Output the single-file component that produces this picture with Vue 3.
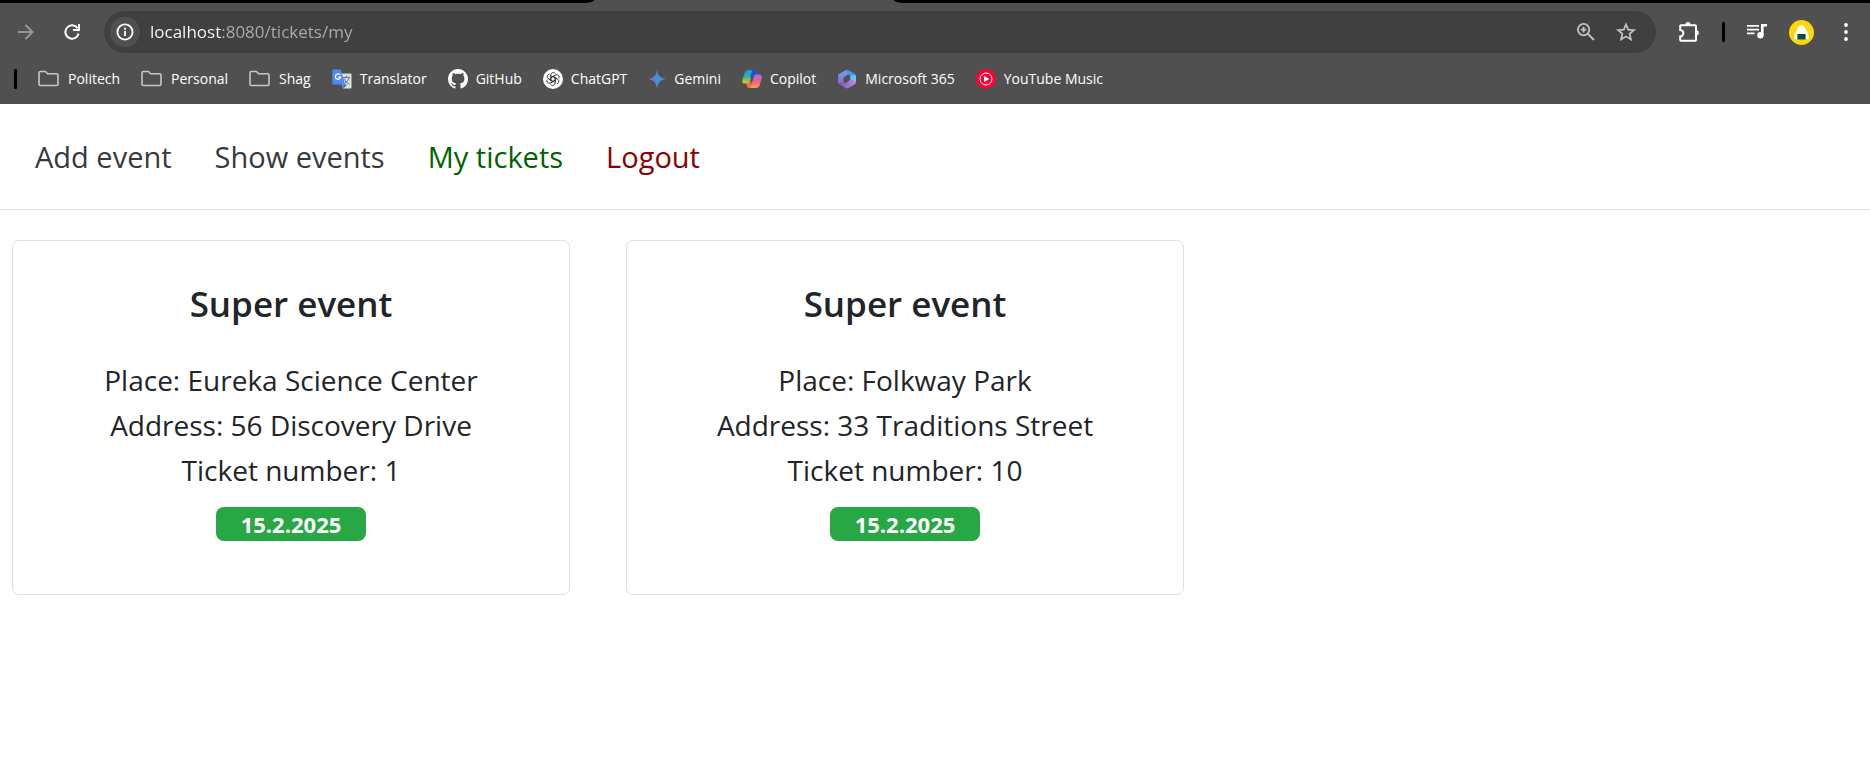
<script setup>
import { ref } from 'vue'

const address = ref('localhost:8080/tickets/my')

const bookmarks = [
  { icon: 'folder', label: 'Politech' },
  { icon: 'folder', label: 'Personal' },
  { icon: 'folder', label: 'Shag' },
  { icon: 'translate', label: 'Translator' },
  { icon: 'github', label: 'GitHub' },
  { icon: 'chatgpt', label: 'ChatGPT' },
  { icon: 'gemini', label: 'Gemini' },
  { icon: 'copilot', label: 'Copilot' },
  { icon: 'm365', label: 'Microsoft 365' },
  { icon: 'ytmusic', label: 'YouTube Music' },
]

const links = [
  { label: 'Add event', tone: '' },
  { label: 'Show events', tone: '' },
  { label: 'My tickets', tone: 'active' },
  { label: 'Logout', tone: 'danger' },
]

const tickets = [
  { id: 1, title: 'Super event', place: 'Eureka Science Center', address: '56 Discovery Drive', number: 1, date: '15.2.2025' },
  { id: 2, title: 'Super event', place: 'Folkway Park', address: '33 Traditions Street', number: 10, date: '15.2.2025' },
]
</script>

<template>
  <div class="window">
    <header class="browser">
      <div class="tabstrip"><span class="strip left"></span><span class="tab"></span><span class="strip right"></span></div>

      <div class="toolbar">
        <button class="tool dim" type="button" aria-label="Forward">
          <svg width="16" height="16" viewBox="0 0 16 16" fill="none" stroke="#969696" stroke-width="2"><path d="M0 8h14M7.5 1l7 7-7 7" /></svg>
        </button>
        <button class="tool reload" type="button" aria-label="Reload">
          <svg width="16" height="16" viewBox="0 0 16 16" fill="none" stroke="#fff" stroke-width="2"><path d="M13.6 4.2A6.7 6.7 0 1 0 14.6 9.6" /><path d="M15 0v6H9" /></svg>
        </button>
        <div class="omnibox">
          <button class="tool info" type="button" aria-label="Site information">
            <svg width="18" height="18" viewBox="0 0 18 18"><circle cx="9" cy="9" r="7.6" fill="none" stroke="#fff" stroke-width="1.8" /><path d="M9 8v5M9 4.8v2" stroke="#fff" stroke-width="1.8" /></svg>
          </button>
          <input v-model="address" class="url" type="text" aria-label="Address" spellcheck="false" />
          <button class="tool" type="button" aria-label="Zoom">
            <svg width="18" height="18" viewBox="0 0 18 18" fill="none" stroke="#c4c4c4" stroke-width="1.8"><circle cx="6.6" cy="6.6" r="5.7" /><path d="M11 11l6 6M3.8 6.6h5.6M6.6 3.8v5.6" /></svg>
          </button>
          <button class="tool star" type="button" aria-label="Bookmark this page">
            <svg width="20" height="20" viewBox="0 0 20 20" fill="none" stroke="#c4c4c4" stroke-width="1.7"><path d="M10 2.4l2.2 5.2 5.7.5-4.3 3.7 1.3 5.6-4.9-3-4.9 3 1.3-5.6L2.1 8.1l5.7-.5z" /></svg>
          </button>
        </div>
        <div class="actions">
          <button class="tool" type="button" aria-label="Extensions">
            <svg width="22" height="22" viewBox="0 0 22 22"><path d="M3 4.2h14.2q.8 0 .8.8v14q0 .8-.8.8H3q-.8 0-.8-.8v-3.6a3.2 3.2 0 0 0 0-6.4V5q0-.8.8-.8z" fill="none" stroke="#fff" stroke-width="2" /><path d="M7.4 4a2.6 2.9 0 0 1 5.2 0zM18 9.2a2.9 2.6 0 0 1 0 5.2z" fill="#fff" /></svg>
          </button>
          <span class="divider"></span>
          <button class="tool" type="button" aria-label="Media controls">
            <svg width="20" height="16" viewBox="0 0 20 16"><path d="M0 1.8h12M0 5.6h12M0 9.4h7.5" stroke="#fff" stroke-width="1.7" /><path d="M14 0h6v2.6h-3.4v8.6H14z" fill="#fff" /><circle cx="13.4" cy="11.3" r="3.2" fill="#fff" /></svg>
          </button>
          <button class="tool avatar" type="button" aria-label="Profile">
            <svg width="25" height="25" viewBox="0 0 25 25"><circle cx="12.5" cy="12.5" r="12.5" fill="#ffd60a" /><path d="M12.5 5c1.8 0 2.8 1.5 4.2 4l2.6 5.4c1.5 3.2.5 4.9-2 4.9H7.7c-2.5 0-3.5-1.7-2-4.9L8.3 9c1.4-2.5 2.4-4 4.2-4z" fill="#fff" /><path d="M8.4 14h8.2v5.5H8.4z" fill="#004d40" /></svg>
          </button>
          <button class="tool" type="button" aria-label="Menu">
            <svg width="4" height="18" viewBox="0 0 4 18" fill="#fff"><circle cx="2" cy="2" r="1.9" /><circle cx="2" cy="9" r="1.9" /><circle cx="2" cy="16" r="1.9" /></svg>
          </button>
        </div>
      </div>

      <nav class="bookmarks" aria-label="Bookmarks">
        <span class="divider"></span>
        <a v-for="item in bookmarks" :key="item.label" href="#" class="bookmark">
          <svg v-if="item.icon === 'folder'" width="22" height="20" viewBox="0 0 22 20" fill="none" stroke="#c7c7c7" stroke-width="1.6"><path d="M1 4q0-1.5 1.5-1.5h5l2 2.3h9q1.5 0 1.5 1.5V15q0 1.5-1.5 1.5h-16Q1 16.500 1 15z" /></svg>
          <svg v-else-if="item.icon === 'translate'" width="20" height="20" viewBox="0 0 20 20"><path d="M8 4.5h10.5q1 0 1 1v13q0 1-1 1H11z" fill="#dedede" /><path d="M10 8.500h8M14.500 6.500v2M12 9.500q1.500 4 5.500 6M17 9q-1 4-5.500 6.500" fill="none" stroke="#607988" stroke-width="1" /><path d="M11 15.500h4L11.500 19.500z" fill="#3059c8" /><path d="M1.500.5h7.200l4.500 15H1.500q-1.200 0-1.200-1.200V1.700Q.3.500 1.500.5z" fill="#4c8bf5" /><path d="M8.300 6A2.700 2.700 0 1 0 8.700 8.200H6.200" fill="none" stroke="#fff" stroke-width="1.300" /></svg>
          <svg v-else-if="item.icon === 'github'" width="20" height="20" viewBox="0 0 16 16" fill="#fff"><path d="M8 0C3.580 0 0 3.580 0 8c0 3.540 2.290 6.530 5.470 7.590.4.070.55-.17.55-.38 0-.19-.01-.82-.01-1.490-2.010.37-2.530-.49-2.690-.94-.09-.23-.48-.94-.82-1.130-.28-.15-.68-.52-.01-.53.63-.01 1.080.58 1.230.82.72 1.210 1.870.87 2.330.66.07-.52.28-.87.51-1.070-1.780-.2-3.640-.89-3.640-3.950 0-.87.31-1.590.82-2.150-.08-.2-.36-1.020.08-2.120 0 0 .67-.21 2.200.82.64-.18 1.320-.27 2-.27s1.360.09 2 .27c1.530-1.040 2.200-.82 2.200-.82.44 1.100.16 1.920.08 2.120.51.56.82 1.270.82 2.150 0 3.070-1.870 3.750-3.650 3.950.29.25.54.73.54 1.480 0 1.070-.01 1.930-.01 2.200 0 .21.15.46.55.38A8.010 8.010 0 0 0 16 8c0-4.420-3.580-8-8-8z" /></svg>
          <svg v-else-if="item.icon === 'chatgpt'" width="20" height="20" viewBox="0 0 20 20"><circle cx="10" cy="10" r="10" fill="#fff" /><g fill="none" stroke="#222" stroke-width=".8"><path v-for="n in 6" :key="n" :transform="`rotate(${n * 60} 10 10)`" d="M7.800 11.300V6.200q0-2.600 2.400-2.700 1.400 0 2.300 1M7.800 8.800L12.200 6.300" /></g></svg>
          <svg v-else-if="item.icon === 'gemini'" width="18" height="20" viewBox="0 0 18 20"><defs><linearGradient id="gemini-fill" x1="0" x2="1"><stop offset="0" stop-color="#8a6cc0" /><stop offset=".5" stop-color="#4a8bdc" /><stop offset="1" stop-color="#35a2cf" /></linearGradient></defs><path d="M9 1q1 8 8.500 9Q10 11 9 19 8 11 .5 10 8 9 9 1z" fill="url(#gemini-fill)" /></svg>
          <svg v-else-if="item.icon === 'copilot'" width="20" height="20" viewBox="0 0 20 20"><defs><linearGradient id="cop-a" x1="0" y1="0" x2="0" y2="1"><stop offset="0" stop-color="#159bed" /><stop offset=".5" stop-color="#36b98c" /><stop offset="1" stop-color="#f3c31e" /></linearGradient><linearGradient id="cop-b" x1="0" y1="0" x2="0" y2="1"><stop offset="0" stop-color="#ac68ee" /><stop offset=".5" stop-color="#f0608d" /><stop offset="1" stop-color="#ff9c50" /></linearGradient></defs><path d="M6.500 1h6.500L9 9q-1.500 5.500-3.500 5.500h-3q-3 0-2.200-3.500L2.800 4Q3.800 1 6.500 1z" fill="url(#cop-a)" /><path d="M10.500 1h2q1.700 0 2.200 2l.5 2.500H12.500q-1.500 0-2 2L9.500 10 8 8z" fill="#1a55d8" /><path d="M14 5.500h3.300q3.200 0 2.400 3.500l-2 7q-.8 3-3.500 3H6.500q2-.5 2.800-3L12 7.500q.5-2 2-2z" fill="url(#cop-b)" /><path d="M4.300 14.500h1.200q1.500 0 2.500-3L9.500 14 9 16.500Q8.500 19 6.800 19q-1.500 0-2-2z" fill="#f67138" /></svg>
          <svg v-else-if="item.icon === 'm365'" width="20" height="20" viewBox="0 0 20 20"><defs><linearGradient id="ms-a" x1="0" y1="0" x2="0" y2="1"><stop offset="0" stop-color="#6da5e8" /><stop offset="1" stop-color="#8d66d0" /></linearGradient><linearGradient id="ms-b" x1="0" x2="1"><stop offset="0" stop-color="#6b58b5" /><stop offset="1" stop-color="#ca8ce0" /></linearGradient></defs><path d="M9 1L2 5Q1 5.600 1 6.800V13.300q0 1 1 1.600l4.500-1.400V8.500L12 5z" fill="url(#ms-a)" /><path d="M8.500 1.200q1.500-1 3 0L18 5q1 .6 1 1.800V13l-5.500-2.500V8z" fill="#3c9be5" /><path d="M13.500 7L19 6v7l-5.500-2.500z" fill="#60c5f1" /><path d="M2 14.900L6.500 13.500 9 14l4.500-3.500L19 12.500q0 2-1.200 2.700L11.500 19q-1.500.8-3 0z" fill="url(#ms-b)" /></svg>
          <svg v-else width="20" height="20" viewBox="0 0 20 20"><circle cx="10" cy="10" r="10" fill="#ff0033" /><circle cx="10" cy="10" r="6" fill="none" stroke="#fff" stroke-width="1" /><path d="M8 6.800l5.200 3.200L8 13.200z" fill="#fff" /></svg>
          <span>{{ item.label }}</span>
        </a>
      </nav>
    </header>

    <nav class="site-nav" aria-label="Main">
      <a v-for="link in links" :key="link.label" href="#" class="site-link" :class="link.tone">{{ link.label }}</a>
    </nav>

    <main class="tickets">
      <article v-for="ticket in tickets" :key="ticket.id" class="card">
        <h2 class="title">{{ ticket.title }}</h2>
        <p class="line">Place: {{ ticket.place }}</p>
        <p class="line">Address: {{ ticket.address }}</p>
        <p class="line">Ticket number: {{ ticket.number }}</p>
        <time class="badge">{{ ticket.date }}</time>
      </article>
    </main>
  </div>
</template>

<style>
body {
  margin: 0;
  background: #fff;
}
</style>

<style scoped>
.window {
  color: #212529;
  font-family: "Segoe UI", "Open Sans", "Noto Sans", sans-serif;
}

.window * {
  box-sizing: border-box;
}

.browser {
  background: #505050;
  color: #fff;
}

.tabstrip {
  display: grid;
  grid-template-columns: 594fr 300fr 976fr;
  height: 3px;
}

.strip {
  background: #000;
}

.strip.left {
  border-bottom-right-radius: 10px 3px;
}

.strip.right {
  border-bottom-left-radius: 10px 3px;
}

.toolbar {
  display: flex;
  align-items: center;
  height: 58px;
  padding: 0 22px 0 18px;
}

.tool {
  display: flex;
  flex: none;
  align-items: center;
  justify-content: center;
  margin: 0;
  padding: 0;
  border: 0;
  background: none;
}

.reload {
  margin: 0 24px 0 30px;
}

.omnibox {
  display: flex;
  flex: 1;
  align-items: center;
  height: 42px;
  padding: 0 20px 0 6px;
  border-radius: 21px;
  background: #404040;
}

.info {
  width: 30px;
  height: 30px;
  border-radius: 50%;
  background: #505050;
}

.url {
  flex: 1;
  min-width: 0;
  margin: 0 10px;
  padding: 0;
  border: 0;
  outline: 0;
  background: linear-gradient(90deg, #fff 71px, #adadad 71px);
  background-clip: text;
  color: transparent;
  font-family: inherit;
  font-size: 17px;
  line-height: 24px;
}

.star {
  margin-left: 21px;
}

.actions {
  display: flex;
  align-items: center;
  gap: 22px;
  margin-left: 22px;
}

.divider {
  width: 3px;
  height: 20px;
  border-radius: 1px;
  background: #000;
}

.avatar {
  margin-right: 8px;
}

.bookmarks {
  display: flex;
  align-items: center;
  gap: 21px;
  height: 43px;
  padding: 0 14px 8px;
}

.bookmark {
  display: flex;
  align-items: center;
  gap: 8px;
  color: #fff;
  font-size: 14px;
  line-height: 20px;
  text-decoration: none;
  white-space: nowrap;
}

.site-nav {
  display: flex;
  align-items: center;
  gap: 43px;
  padding: 30px 35px;
  border-bottom: 1px solid #dee2e6;
}

.site-link {
  color: #343a40;
  font-size: 29px;
  line-height: 45px;
  text-decoration: none;
}

.active {
  color: #006400;
}

.danger {
  color: #8b0000;
}

.tickets {
  display: grid;
  grid-template-columns: repeat(3, 1fr);
  gap: 56px;
  padding: 30px 72px 30px 12px;
}

.card {
  display: flex;
  flex-direction: column;
  align-items: center;
  padding: 40px 30px 53px;
  border: 1px solid #dfdfdf;
  border-radius: 7px;
}

.title {
  margin: 0 0 32px;
  font-size: 35px;
  font-weight: 600;
  line-height: 45px;
}

.line {
  margin: 0;
  font-size: 28px;
  line-height: 45px;
}

.badge {
  width: 150px;
  margin-top: 14px;
  border-radius: 8px;
  background: #28a745;
  color: #fff;
  font-size: 22px;
  font-weight: 700;
  line-height: 34px;
  text-align: center;
}
</style>
